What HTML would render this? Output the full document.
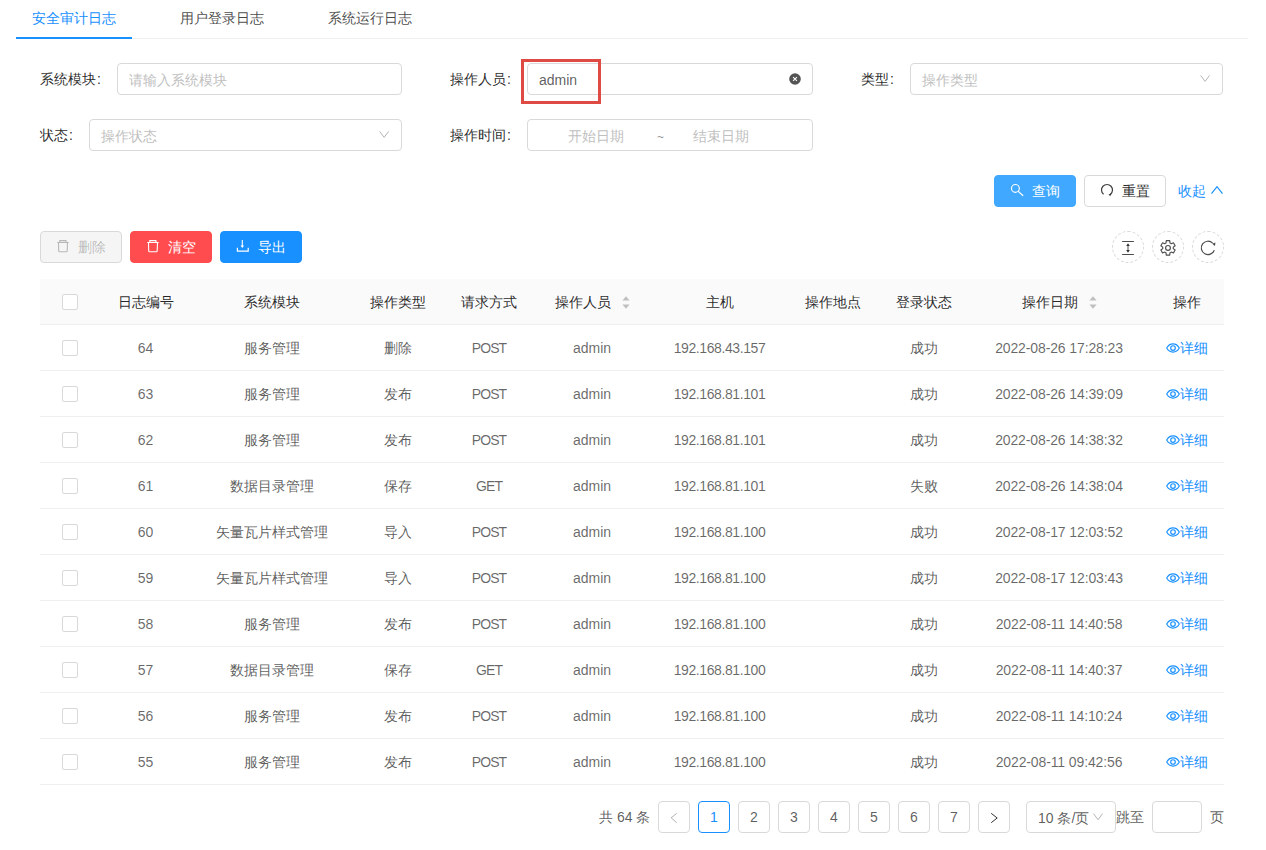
<!DOCTYPE html>
<html><head><meta charset="utf-8">
<style>
*{box-sizing:border-box;margin:0;padding:0}
html,body{width:1266px;height:850px;overflow:hidden;background:#fff}
body{font-family:"Liberation Sans",sans-serif;font-size:14px;color:rgba(0,0,0,.85);position:relative}
.abs{position:absolute}
.tab{position:absolute;top:0;height:38px;line-height:36px;font-size:14px;color:rgba(0,0,0,.72);text-align:center}
.tab.act{color:#1890ff}
.tabline{position:absolute;left:16px;top:38px;width:1232px;height:1px;background:#f0f0f0}
.ink{position:absolute;left:16px;top:37px;width:116px;height:2px;background:#1890ff}
.lbl{position:absolute;height:32px;line-height:33px;color:rgba(0,0,0,.85);white-space:nowrap}
.lbl i{font-style:normal;margin-left:1px}
.inp{position:absolute;height:32px;border:1px solid #d9d9d9;border-radius:4px;line-height:32px;padding-left:11px;color:#bfbfbf;background:#fff;white-space:nowrap}
.inp.val{color:rgba(0,0,0,.65)}
.arrow{position:absolute;top:10px;width:12px;height:12px}
.btn{position:absolute;height:32px;border-radius:4px;line-height:31px;border:1px solid #d9d9d9;background:#fff;color:rgba(0,0,0,.85);white-space:nowrap}
.btn svg{position:absolute}
.btn span{position:absolute;top:0}
.cir{position:absolute;top:231px;width:32px;height:32px;border:1px dashed #d9d9d9;border-radius:50%}
.cir svg{position:absolute;left:3px;top:4px}
table{position:absolute;left:40px;top:279px;width:1184px;border-collapse:collapse;table-layout:fixed}
th{background:#fafafa;height:45px;font-weight:normal;color:rgba(0,0,0,.85);border-bottom:1px solid #f0f0f0;text-align:center;padding:2px 0 0 0}
td{height:46px;border-bottom:1px solid #f0f0f0;text-align:center;color:rgba(0,0,0,.65);padding:2px 0 0 0;white-space:nowrap}
th.last,td.last{padding-left:3px}
th:first-child{border-top-left-radius:2px}
th:last-child{border-top-right-radius:2px}
.cj{position:relative;top:1px}
.lt{color:rgba(0,0,0,.6)}.ls1{letter-spacing:-0.9px}.ls2{letter-spacing:-0.4px}.ls3{letter-spacing:-0.12px}
th .cb,td .cb{position:relative;top:-1px}
.cb{display:inline-block;width:16px;height:16px;border:1px solid #d9d9d9;border-radius:2px;background:#fff;vertical-align:middle}
.sorter{display:inline-block;vertical-align:middle;margin-left:11px;position:relative;top:0px}
.eye{vertical-align:middle;position:relative;top:0px;margin-right:0px}
.link{color:#1890ff}
.pg{position:absolute;top:801px;width:32px;height:32px;border:1px solid #d9d9d9;border-radius:4px;text-align:center;line-height:31px;color:rgba(0,0,0,.65);background:#fff}
.pg.act{border-color:#1890ff;color:#1890ff}
.pg svg{position:absolute;left:10px;top:10px}
</style></head><body>
<!-- tabs -->
<div class="tab act" style="left:16px;width:116px">安全审计日志</div>
<div class="tab" style="left:164px;width:116px">用户登录日志</div>
<div class="tab" style="left:312px;width:116px">系统运行日志</div>
<div class="tabline"></div>
<div class="ink"></div>

<!-- form row 1 -->
<div class="lbl" style="left:40px;top:63px">系统模块<i>:</i></div>
<div class="inp" style="left:117px;top:63px;width:285px">请输入系统模块</div>
<div class="lbl" style="left:450px;top:63px">操作人员<i>:</i></div>
<div class="inp val" style="left:527px;top:63px;width:286px">admin
  <svg class="abs" style="left:261px;top:9px" width="12" height="12" viewBox="0 0 12 12"><circle cx="6" cy="6" r="5.8" fill="rgba(0,0,0,.67)"/><path d="M4.1 4.1L7.9 7.9M7.9 4.1L4.1 7.9" stroke="#fff" stroke-width="1.1"/></svg>
</div>
<div class="abs" style="left:521px;top:59px;width:80px;height:45px;border:3px solid #e04a45"></div>
<div class="lbl" style="left:861px;top:63px">类型<i>:</i></div>
<div class="inp" style="left:910px;top:63px;width:313px">操作类型
  <svg class="arrow" style="left:289px" viewBox="0 0 12 12"><path d="M0.6 1.4L5.1 7.4L9.6 1.4" fill="none" stroke="#b5b5b5" stroke-width="1"/></svg>
</div>

<!-- form row 2 -->
<div class="lbl" style="left:40px;top:119px">状态<i>:</i></div>
<div class="inp" style="left:89px;top:119px;width:313px">操作状态
  <svg class="arrow" style="left:289px" viewBox="0 0 12 12"><path d="M0.6 1.4L5.1 7.4L9.6 1.4" fill="none" stroke="#b5b5b5" stroke-width="1"/></svg>
</div>
<div class="lbl" style="left:450px;top:119px">操作时间<i>:</i></div>
<div class="inp" style="left:527px;top:119px;width:286px;padding:0">
  <span class="abs" style="left:40px;top:0">开始日期</span>
  <span class="abs" style="left:129px;top:1px;font-size:12px;color:rgba(0,0,0,.45)">~</span>
  <span class="abs" style="left:165px;top:0">结束日期</span>
</div>

<!-- search buttons -->
<div class="btn" style="left:994px;top:175px;width:82px;background:#40a9ff;border-color:#40a9ff;color:#fff">
  <svg style="left:15px;top:7px" width="16" height="16" viewBox="0 0 16 16"><circle cx="5.4" cy="5.4" r="3.9" fill="none" stroke="#fff" stroke-width="1.15"/><path d="M8.3 8.4L12.8 12.5" stroke="#fff" stroke-width="1.2" stroke-linecap="round"/></svg>
  <span style="left:37px">查询</span>
</div>
<div class="btn" style="left:1084px;top:175px;width:82px">
  <svg style="left:10px;top:6px" width="20" height="20" viewBox="0 0 20 20"><path d="M8.6 12.3A5.5 5.5 0 1 1 15.4 12.3" fill="none" stroke="rgba(0,0,0,.75)" stroke-width="1.2"/><path d="M13.5 12.2L16.7 11.5L15.1 14.3Z" fill="rgba(0,0,0,.75)"/></svg>
  <span style="left:37px">重置</span>
</div>
<div class="abs link" style="left:1178px;top:175px;line-height:32px;white-space:nowrap">收起</div>
<svg class="abs" style="left:1211px;top:186px" width="12" height="9" viewBox="0 0 12 9"><path d="M0.5 7.6L6 0.7L11.5 7.6" fill="none" stroke="#1890ff" stroke-width="1.2"/></svg>

<!-- toolbar -->
<div class="btn" style="left:40px;top:231px;width:82px;background:#f5f5f5;color:rgba(0,0,0,.25)">
  <svg style="left:15px;top:6px" width="14" height="16" viewBox="0 0 14 16"><path d="M1.2 4.5H12.7M3.8 4.5V2.6H10V4.5M2.5 4.5L2.7 13Q2.8 13.7 3.5 13.7H10.4Q11.1 13.7 11.2 13L11.5 4.5" fill="none" stroke="rgba(0,0,0,.25)" stroke-width="1.1"/></svg>
  <span style="left:37px">删除</span>
</div>
<div class="btn" style="left:130px;top:231px;width:82px;background:#ff4d4f;border-color:#ff4d4f;color:#fff">
  <svg style="left:15px;top:6px" width="14" height="16" viewBox="0 0 14 16"><path d="M1.2 4.5H12.7M3.8 4.5V2.6H10V4.5M2.5 4.5L2.7 13Q2.8 13.7 3.5 13.7H10.4Q11.1 13.7 11.2 13L11.5 4.5" fill="none" stroke="#fff" stroke-width="1.1"/></svg>
  <span style="left:37px">清空</span>
</div>
<div class="btn" style="left:220px;top:231px;width:82px;background:#1890ff;border-color:#1890ff;color:#fff">
  <svg style="left:15px;top:6px" width="14" height="16" viewBox="0 0 14 16"><path d="M6.3 2V8.5" stroke="#fff" stroke-width="1.1"/><path d="M4.5 7.5H8.1L6.3 9.9Z" fill="#fff"/><path d="M1.4 9.8V13.2H12.2V9.8" fill="none" stroke="#fff" stroke-width="1.2"/></svg>
  <span style="left:37px">导出</span>
</div>

<div class="cir" style="left:1112px">
  <svg width="24" height="24" viewBox="0 0 24 24" style="left:3px;top:4px"><path d="M6.1 5.5H17.9M6.1 18.5H17.9" stroke="rgba(0,0,0,.7)" stroke-width="1.2"/><path d="M12 8.5V15.5" stroke="rgba(0,0,0,.62)" stroke-width="1.1"/><path d="M10.1 9.9H13.9L12 7.2Z M10.1 14.1H13.9L12 16.7Z" fill="rgba(0,0,0,.7)"/></svg>
</div>
<div class="cir" style="left:1152px">
  <svg width="24" height="24" viewBox="0 0 24 24" style="left:3px;top:4px"><path d="M10.01 6.99 L10.32 4.64 L13.68 4.64 L13.99 6.99 A5.30 5.30 0 0 1 15.26 7.72 L17.45 6.82 L19.12 9.72 L17.25 11.16 A5.30 5.30 0 0 1 17.25 12.64 L19.12 14.08 L17.45 16.98 L15.26 16.08 A5.30 5.30 0 0 1 13.99 16.81 L13.68 19.16 L10.32 19.16 L10.01 16.81 A5.30 5.30 0 0 1 8.74 16.08 L6.55 16.98 L4.88 14.08 L6.75 12.64 A5.30 5.30 0 0 1 6.75 11.16 L4.88 9.72 L6.55 6.82 L8.74 7.72 A5.30 5.30 0 0 1 10.01 6.99Z" fill="none" stroke="rgba(0,0,0,.7)" stroke-width="1.15" stroke-linejoin="round"/><circle cx="12" cy="11.9" r="2.4" fill="none" stroke="rgba(0,0,0,.7)" stroke-width="1.15"/></svg>
</div>
<div class="cir" style="left:1192px">
  <svg width="24" height="24" viewBox="0 0 24 24" style="left:3px;top:4px"><path d="M18.3 14.2A6.7 6.7 0 1 1 16.65 7.08" fill="none" stroke="rgba(0,0,0,.7)" stroke-width="1.2"/><path d="M16.1 7.7L19.4 6.6L19 9.9Z" fill="rgba(0,0,0,.7)"/></svg>
</div>

<!-- table -->
<table>
<colgroup><col style="width:60px"><col style="width:91px"><col style="width:161px"><col style="width:92px"><col style="width:90px"><col style="width:116px"><col style="width:139px"><col style="width:87px"><col style="width:96px"><col style="width:174px"><col style="width:78px"></colgroup>
<thead><tr><th><span class="cb"></span></th><th><span class="cj">日志编号</span></th><th><span class="cj">系统模块</span></th><th><span class="cj">操作类型</span></th><th><span class="cj">请求方式</span></th><th><span class="cj">操作人员</span><svg class="sorter" width="8" height="13" viewBox="0 0 8 13"><path d="M4 0.3L7.6 4.6H0.4Z" fill="#bfbfbf"/><path d="M4 12.7L7.6 8.4H0.4Z" fill="#bfbfbf"/></svg></th><th><span class="cj">主机</span></th><th><span class="cj">操作地点</span></th><th><span class="cj">登录状态</span></th><th><span class="cj">操作日期</span><svg class="sorter" width="8" height="13" viewBox="0 0 8 13"><path d="M4 0.3L7.6 4.6H0.4Z" fill="#bfbfbf"/><path d="M4 12.7L7.6 8.4H0.4Z" fill="#bfbfbf"/></svg></th><th class="last"><span class="cj">操作</span></th></tr></thead>
<tbody>
<tr><td><span class="cb"></span></td><td class="lt">64</td><td><span class="cj">服务管理</span></td><td><span class="cj">删除</span></td><td class="lt ls1">POST</td><td class="lt">admin</td><td class="lt ls2">192.168.43.157</td><td></td><td><span class="cj">成功</span></td><td class="lt ls3">2022-08-26 17:28:23</td><td class="last"><span class="link"><svg class="eye" width="14" height="14" viewBox="0 0 14 14"><path d="M0.7 7C2.2 4.3 4.4 2.9 7 2.9S11.8 4.3 13.3 7C11.8 9.7 9.6 11.1 7 11.1S2.2 9.7 0.7 7Z" fill="none" stroke="#1890ff" stroke-width="1.15"/><circle cx="7" cy="7" r="2.3" fill="none" stroke="#1890ff" stroke-width="1.15"/></svg><span class="cj">详细</span></span></td></tr>
<tr><td><span class="cb"></span></td><td class="lt">63</td><td><span class="cj">服务管理</span></td><td><span class="cj">发布</span></td><td class="lt ls1">POST</td><td class="lt">admin</td><td class="lt ls2">192.168.81.101</td><td></td><td><span class="cj">成功</span></td><td class="lt ls3">2022-08-26 14:39:09</td><td class="last"><span class="link"><svg class="eye" width="14" height="14" viewBox="0 0 14 14"><path d="M0.7 7C2.2 4.3 4.4 2.9 7 2.9S11.8 4.3 13.3 7C11.8 9.7 9.6 11.1 7 11.1S2.2 9.7 0.7 7Z" fill="none" stroke="#1890ff" stroke-width="1.15"/><circle cx="7" cy="7" r="2.3" fill="none" stroke="#1890ff" stroke-width="1.15"/></svg><span class="cj">详细</span></span></td></tr>
<tr><td><span class="cb"></span></td><td class="lt">62</td><td><span class="cj">服务管理</span></td><td><span class="cj">发布</span></td><td class="lt ls1">POST</td><td class="lt">admin</td><td class="lt ls2">192.168.81.101</td><td></td><td><span class="cj">成功</span></td><td class="lt ls3">2022-08-26 14:38:32</td><td class="last"><span class="link"><svg class="eye" width="14" height="14" viewBox="0 0 14 14"><path d="M0.7 7C2.2 4.3 4.4 2.9 7 2.9S11.8 4.3 13.3 7C11.8 9.7 9.6 11.1 7 11.1S2.2 9.7 0.7 7Z" fill="none" stroke="#1890ff" stroke-width="1.15"/><circle cx="7" cy="7" r="2.3" fill="none" stroke="#1890ff" stroke-width="1.15"/></svg><span class="cj">详细</span></span></td></tr>
<tr><td><span class="cb"></span></td><td class="lt">61</td><td><span class="cj">数据目录管理</span></td><td><span class="cj">保存</span></td><td class="lt ls1">GET</td><td class="lt">admin</td><td class="lt ls2">192.168.81.101</td><td></td><td><span class="cj">失败</span></td><td class="lt ls3">2022-08-26 14:38:04</td><td class="last"><span class="link"><svg class="eye" width="14" height="14" viewBox="0 0 14 14"><path d="M0.7 7C2.2 4.3 4.4 2.9 7 2.9S11.8 4.3 13.3 7C11.8 9.7 9.6 11.1 7 11.1S2.2 9.7 0.7 7Z" fill="none" stroke="#1890ff" stroke-width="1.15"/><circle cx="7" cy="7" r="2.3" fill="none" stroke="#1890ff" stroke-width="1.15"/></svg><span class="cj">详细</span></span></td></tr>
<tr><td><span class="cb"></span></td><td class="lt">60</td><td><span class="cj">矢量瓦片样式管理</span></td><td><span class="cj">导入</span></td><td class="lt ls1">POST</td><td class="lt">admin</td><td class="lt ls2">192.168.81.100</td><td></td><td><span class="cj">成功</span></td><td class="lt ls3">2022-08-17 12:03:52</td><td class="last"><span class="link"><svg class="eye" width="14" height="14" viewBox="0 0 14 14"><path d="M0.7 7C2.2 4.3 4.4 2.9 7 2.9S11.8 4.3 13.3 7C11.8 9.7 9.6 11.1 7 11.1S2.2 9.7 0.7 7Z" fill="none" stroke="#1890ff" stroke-width="1.15"/><circle cx="7" cy="7" r="2.3" fill="none" stroke="#1890ff" stroke-width="1.15"/></svg><span class="cj">详细</span></span></td></tr>
<tr><td><span class="cb"></span></td><td class="lt">59</td><td><span class="cj">矢量瓦片样式管理</span></td><td><span class="cj">导入</span></td><td class="lt ls1">POST</td><td class="lt">admin</td><td class="lt ls2">192.168.81.100</td><td></td><td><span class="cj">成功</span></td><td class="lt ls3">2022-08-17 12:03:43</td><td class="last"><span class="link"><svg class="eye" width="14" height="14" viewBox="0 0 14 14"><path d="M0.7 7C2.2 4.3 4.4 2.9 7 2.9S11.8 4.3 13.3 7C11.8 9.7 9.6 11.1 7 11.1S2.2 9.7 0.7 7Z" fill="none" stroke="#1890ff" stroke-width="1.15"/><circle cx="7" cy="7" r="2.3" fill="none" stroke="#1890ff" stroke-width="1.15"/></svg><span class="cj">详细</span></span></td></tr>
<tr><td><span class="cb"></span></td><td class="lt">58</td><td><span class="cj">服务管理</span></td><td><span class="cj">发布</span></td><td class="lt ls1">POST</td><td class="lt">admin</td><td class="lt ls2">192.168.81.100</td><td></td><td><span class="cj">成功</span></td><td class="lt ls3">2022-08-11 14:40:58</td><td class="last"><span class="link"><svg class="eye" width="14" height="14" viewBox="0 0 14 14"><path d="M0.7 7C2.2 4.3 4.4 2.9 7 2.9S11.8 4.3 13.3 7C11.8 9.7 9.6 11.1 7 11.1S2.2 9.7 0.7 7Z" fill="none" stroke="#1890ff" stroke-width="1.15"/><circle cx="7" cy="7" r="2.3" fill="none" stroke="#1890ff" stroke-width="1.15"/></svg><span class="cj">详细</span></span></td></tr>
<tr><td><span class="cb"></span></td><td class="lt">57</td><td><span class="cj">数据目录管理</span></td><td><span class="cj">保存</span></td><td class="lt ls1">GET</td><td class="lt">admin</td><td class="lt ls2">192.168.81.100</td><td></td><td><span class="cj">成功</span></td><td class="lt ls3">2022-08-11 14:40:37</td><td class="last"><span class="link"><svg class="eye" width="14" height="14" viewBox="0 0 14 14"><path d="M0.7 7C2.2 4.3 4.4 2.9 7 2.9S11.8 4.3 13.3 7C11.8 9.7 9.6 11.1 7 11.1S2.2 9.7 0.7 7Z" fill="none" stroke="#1890ff" stroke-width="1.15"/><circle cx="7" cy="7" r="2.3" fill="none" stroke="#1890ff" stroke-width="1.15"/></svg><span class="cj">详细</span></span></td></tr>
<tr><td><span class="cb"></span></td><td class="lt">56</td><td><span class="cj">服务管理</span></td><td><span class="cj">发布</span></td><td class="lt ls1">POST</td><td class="lt">admin</td><td class="lt ls2">192.168.81.100</td><td></td><td><span class="cj">成功</span></td><td class="lt ls3">2022-08-11 14:10:24</td><td class="last"><span class="link"><svg class="eye" width="14" height="14" viewBox="0 0 14 14"><path d="M0.7 7C2.2 4.3 4.4 2.9 7 2.9S11.8 4.3 13.3 7C11.8 9.7 9.6 11.1 7 11.1S2.2 9.7 0.7 7Z" fill="none" stroke="#1890ff" stroke-width="1.15"/><circle cx="7" cy="7" r="2.3" fill="none" stroke="#1890ff" stroke-width="1.15"/></svg><span class="cj">详细</span></span></td></tr>
<tr><td><span class="cb"></span></td><td class="lt">55</td><td><span class="cj">服务管理</span></td><td><span class="cj">发布</span></td><td class="lt ls1">POST</td><td class="lt">admin</td><td class="lt ls2">192.168.81.100</td><td></td><td><span class="cj">成功</span></td><td class="lt ls3">2022-08-11 09:42:56</td><td class="last"><span class="link"><svg class="eye" width="14" height="14" viewBox="0 0 14 14"><path d="M0.7 7C2.2 4.3 4.4 2.9 7 2.9S11.8 4.3 13.3 7C11.8 9.7 9.6 11.1 7 11.1S2.2 9.7 0.7 7Z" fill="none" stroke="#1890ff" stroke-width="1.15"/><circle cx="7" cy="7" r="2.3" fill="none" stroke="#1890ff" stroke-width="1.15"/></svg><span class="cj">详细</span></span></td></tr>
</tbody>
</table>

<!-- pagination -->
<div class="abs" style="left:599px;top:801px;line-height:33px;color:rgba(0,0,0,.65);white-space:nowrap">共 64 条</div>
<div class="pg" style="left:658px"><svg width="12" height="12" viewBox="0 0 12 12"><path d="M7.7 1.3L2.2 5.8L7.7 10.7" fill="none" stroke="rgba(0,0,0,.3)" stroke-width="1"/></svg></div>
<div class="pg act" style="left:698px">1</div>
<div class="pg" style="left:738px">2</div>
<div class="pg" style="left:778px">3</div>
<div class="pg" style="left:818px">4</div>
<div class="pg" style="left:858px">5</div>
<div class="pg" style="left:898px">6</div>
<div class="pg" style="left:938px">7</div>
<div class="pg" style="left:978px"><svg width="12" height="12" viewBox="0 0 12 12"><path d="M2.2 1.3L8.2 6L2.2 10.7" fill="none" stroke="rgba(0,0,0,.8)" stroke-width="1"/></svg></div>
<div class="abs" style="left:1026px;top:801px;width:90px;height:32px;border:1px solid #d9d9d9;border-radius:4px;line-height:32px;padding-left:11px;color:rgba(0,0,0,.65);white-space:nowrap">10 条/页
  <svg class="abs" style="left:66px;top:11px" width="11" height="8" viewBox="0 0 11 8"><path d="M0.5 0.6L5 6.8L9.5 0.6" fill="none" stroke="#b5b5b5" stroke-width="1"/></svg>
</div>
<div class="abs" style="left:1116px;top:801px;line-height:33px;color:rgba(0,0,0,.65)">跳至</div>
<div class="abs" style="left:1152px;top:801px;width:50px;height:32px;border:1px solid #d9d9d9;border-radius:4px"></div>
<div class="abs" style="left:1210px;top:801px;line-height:33px;color:rgba(0,0,0,.65)">页</div>
</body></html>
